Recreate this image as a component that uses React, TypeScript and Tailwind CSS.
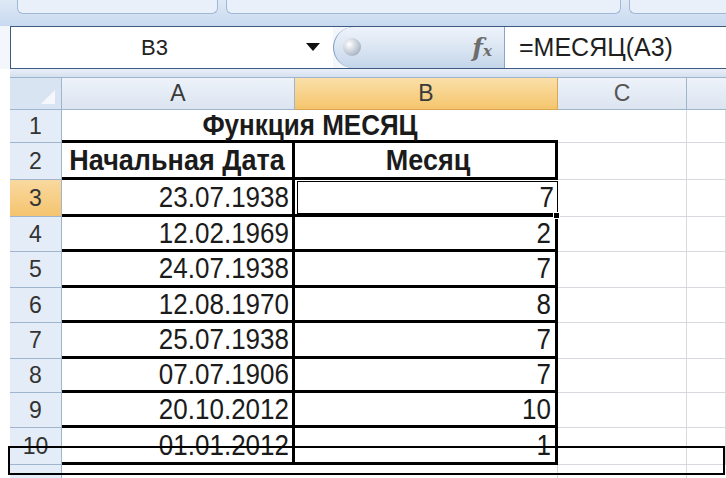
import React from 'react'

const rows = [
  { n: 3, date: '23.07.1938', m: '7', h: 'h-[37px]' },
  { n: 4, date: '12.02.1969', m: '2', h: 'h-[35px]' },
  { n: 5, date: '24.07.1938', m: '7', h: 'h-[36px]' },
  { n: 6, date: '12.08.1970', m: '8', h: 'h-[35px]' },
  { n: 7, date: '25.07.1938', m: '7', h: 'h-[36px]' },
  { n: 8, date: '07.07.1906', m: '7', h: 'h-[34px]' },
  { n: 9, date: '20.10.2012', m: '10', h: 'h-[35px]' },
  { n: 10, date: '01.01.2012', m: '1', h: 'h-[37px]' },
]

function RowHead({ n, active }: { n: number | string; active?: boolean }) {
  return (
    <div
      className={
        'flex w-[52px] shrink-0 items-center justify-center border-b border-r border-[#9fb5ce] text-[23px] text-[#333] ' +
        (active ? 'bg-gradient-to-b from-[#f9d99f] to-[#f4c46e]' : 'bg-[#e4ecf7]')
      }
    >
      {n}
    </div>
  )
}

function Grey({ w }: { w: string }) {
  return <div className={'shrink-0 border-b border-r border-[#d6d9de] ' + w} />
}

// cell text in the shot is a little taller than wide
function T({ children }: { children: React.ReactNode }) {
  return <span className="inline-block scale-y-[1.12]">{children}</span>
}

export default function App() {
  return (
    <div className="relative h-[478px] w-[726px] overflow-hidden bg-white font-['Liberation_Sans',Arial,sans-serif]">
      {/* ribbon remains */}
      <div className="flex h-[26px] gap-[8px] bg-gradient-to-b from-[#dfe9f6] to-[#c8d9ef] pl-[17px]">
        <div className="h-[14px] w-[201px] rounded-b-[6px] border border-t-0 border-[#9fb8d8] bg-[#e9f0f9]" />
        <div className="h-[14px] w-[395px] rounded-b-[6px] border border-t-0 border-[#9fb8d8] bg-[#e9f0f9]" />
        <div className="h-[14px] flex-1 rounded-bl-[6px] border border-r-0 border-t-0 border-[#9fb8d8] bg-[#e9f0f9]" />
      </div>

      {/* formula bar */}
      <div className="flex h-[43px] bg-[#f3f6fa] pl-[10px]">
        <div className="flex flex-1 border-y border-l border-[#3d5a80]">
          <div className="relative flex w-[322px] shrink-0 items-center bg-white">
            <span className="ml-[130px] text-[22px] text-[#222]">B3</span>
            <svg className="absolute left-[295px] top-[16px]" width="14" height="8" viewBox="0 0 14 8">
              <path d="M0 0 H14 L7 8 Z" fill="#111" />
            </svg>
          </div>
          <div className="relative flex w-[171px] shrink-0 items-center justify-end rounded-l-full border-l border-[#7f9cc2] bg-gradient-to-b from-[#eef3fa] via-[#dbe6f3] to-[#c4d5ea] pr-[12px]">
            <div className="absolute left-[9px] top-[11px] h-[18px] w-[18px] rounded-full bg-[radial-gradient(circle_at_35%_35%,#ffffff,#b9c3cf_60%,#8e9aa8)]" />
            <span className="font-['DejaVu_Serif',serif] text-[25px] font-bold italic text-[#6d6d6d]">
              f<span className="text-[15px]">x</span>
            </span>
          </div>
          <div className="flex flex-1 items-center border-l border-[#8aa4c6] bg-white pl-[14px] text-[25px] text-[#1f1f1f]">
            =МЕСЯЦ(А3)
          </div>
        </div>
      </div>

      {/* band */}
      <div className="ml-[10px] h-[9px] border-b border-[#9fb5ce] bg-gradient-to-b from-[#e9eff8] to-[#d5e1f0]" />

      {/* column headers */}
      <div className="ml-[10px] flex h-[32px] text-[23px] text-[#3a3a3a]">
        <div className="relative w-[52px] shrink-0 border-b border-r border-[#9fb5ce] bg-[#d9e4f3]">
          <svg className="absolute bottom-[5px] right-[6px]" width="14" height="14" viewBox="0 0 14 14">
            <path d="M14 0 V14 H0 Z" fill="#f4f7fb" />
          </svg>
        </div>
        <div className="flex w-[233px] shrink-0 items-center justify-center border-b border-r border-[#9fb5ce] bg-gradient-to-b from-[#eef3fa] to-[#dbe4f0]">
          A
        </div>
        <div className="flex w-[263px] shrink-0 items-center justify-center border-b border-r border-[#d9a84f] bg-gradient-to-b from-[#fadfa8] to-[#f5c56c]">
          B
        </div>
        <div className="flex w-[129px] shrink-0 items-center justify-center border-b border-r border-[#9fb5ce] bg-gradient-to-b from-[#eef3fa] to-[#dbe4f0] text-[#555]">
          C
        </div>
        <div className="flex-1 border-b border-[#9fb5ce] bg-gradient-to-b from-[#eef3fa] to-[#dbe4f0]" />
      </div>

      {/* row 1 */}
      <div className="ml-[10px] flex h-[33px]">
        <RowHead n={1} />
        <div className="flex w-[496px] shrink-0 items-center justify-center border-b-[3px] border-black text-[26px] font-bold text-[#1b1b1b]">
          <T>Функция МЕСЯЦ</T>
        </div>
        <Grey w="w-[129px]" />
        <Grey w="flex-1" />
      </div>

      {/* row 2 */}
      <div className="ml-[10px] flex h-[37px]">
        <RowHead n={2} />
        <div className="flex w-[233px] shrink-0 items-center justify-center border-b-[3px] border-r-[3px] border-black text-[27px] font-bold text-[#1b1b1b]">
          <T>Начальная Дата</T>
        </div>
        <div className="flex w-[263px] shrink-0 items-center justify-center border-b-[3px] border-r-[3px] border-black pl-[6px] text-[27px] font-bold text-[#1b1b1b]">
          <T>Месяц</T>
        </div>
        <Grey w="w-[129px]" />
        <Grey w="flex-1" />
      </div>

      {rows.map((r) => (
        <div key={r.n} className={'ml-[10px] flex ' + r.h}>
          <RowHead n={r.n} active={r.n === 3} />
          <div className="flex w-[233px] shrink-0 items-center justify-end border-b-[3px] border-r-[3px] border-black pr-[3px] text-[26px] text-[#1b1b1b]">
            <T>{r.date}</T>
          </div>
          {r.n === 3 ? (
            <div className="relative flex w-[263px] shrink-0 border-b-[3px] border-black">
              <div className="ml-[2px] mt-[1px] flex flex-1 items-center justify-end border border-black pl-[2px] pr-[3px] text-[26px] text-[#1b1b1b]">
                <T>{r.m}</T>
              </div>
              <div className="absolute -bottom-[5px] right-[-2px] h-[7px] w-[7px] border border-white bg-black" />
            </div>
          ) : (
            <div className="flex w-[263px] shrink-0 items-center justify-end border-b-[3px] border-r-[3px] border-black pr-[4px] text-[26px] text-[#1b1b1b]">
              <T>{r.m}</T>
            </div>
          )}
          <Grey w="w-[129px]" />
          <Grey w="flex-1" />
        </div>
      ))}

      {/* row 11 (cut off) */}
      <div className="ml-[10px] flex h-[20px]">
        <div className="w-[52px] shrink-0 border-r border-[#9fb5ce] bg-[#e4ecf7]" />
        <div className="w-[233px] shrink-0" />
        <div className="w-[263px] shrink-0 border-r border-[#d6d9de]" />
        <div className="w-[129px] shrink-0 border-r border-[#d6d9de]" />
      </div>

      {/* annotation frame */}
      <div className="absolute left-[8px] top-[446px] h-[29px] w-[717px] border-2 border-black" />
    </div>
  )
}
